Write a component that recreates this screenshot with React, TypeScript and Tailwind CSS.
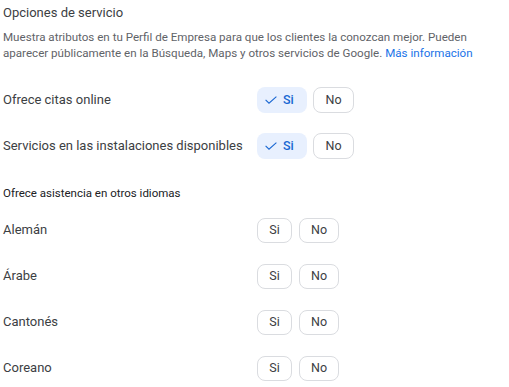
import React from "react";

const font = { fontFamily: "Roboto, 'Noto Sans', sans-serif" };

function Check() {
  return (
    <svg width="12" height="8" viewBox="0 0 12 8" fill="none" className="shrink-0">
      <path d="M0.6 3.8 L4 7.2 L11.4 0.6" stroke="#1967d2" strokeWidth="1.1" />
    </svg>
  );
}

function SelectedPair() {
  return (
    <div className="flex items-center gap-[6px]">
      <div className="flex h-[26px] w-[50px] items-center rounded-[8px] bg-[#e8f0fe] pl-[8px] text-[12.5px] font-medium text-[#1967d2]">
        <Check />
        <span className="ml-[6px]">Si</span>
      </div>
      <div className="flex h-[26px] w-[41px] items-center justify-center rounded-[8px] border border-[#dadce0] text-[12.5px] text-[#3c4043]">
        No
      </div>
    </div>
  );
}

function PlainPair() {
  return (
    <div className="flex items-center gap-[7px]">
      <div className="flex h-[25px] w-[35px] items-center justify-center rounded-[8px] border border-[#dadce0] text-[12.5px] text-[#3c4043]">
        Si
      </div>
      <div className="flex h-[25px] w-[40px] items-center justify-center rounded-[8px] border border-[#dadce0] text-[12.5px] text-[#3c4043]">
        No
      </div>
    </div>
  );
}

function Row({ label, selected }: { label: string; selected?: boolean }) {
  return (
    <div className="flex h-[46px] items-center">
      <div className="w-[254px] whitespace-nowrap text-[13px] text-[#3c4043]">{label}</div>
      {selected ? <SelectedPair /> : <PlainPair />}
    </div>
  );
}

export default function App() {
  return (
    <div className="h-[387px] w-[509px] overflow-hidden bg-white pl-[3px] pt-[3px]" style={font}>
      <div className="text-[13px] leading-[20px] text-[#3c4043]">Opciones de servicio</div>
      <div className="mt-[6px] whitespace-nowrap text-[11.6px] leading-[16px] text-[#5f6368]">
        Muestra atributos en tu Perfil de Empresa para que los clientes la conozcan mejor. Pueden
        <br />
        aparecer públicamente en la Búsqueda, Maps y otros servicios de Google.{" "}
        <span className="text-[#1a73e8]">Más información</span>
      </div>
      <div className="mt-[16px]">
        <Row label="Ofrece citas online" selected />
        <Row label="Servicios en las instalaciones disponibles" selected />
      </div>
      <div className="mt-[16px] text-[11.5px] leading-[16px] text-[#202124]">
        Ofrece asistencia en otros idiomas
      </div>
      <div className="mt-[6px]">
        <Row label="Alemán" />
        <Row label="Árabe" />
        <Row label="Cantonés" />
        <Row label="Coreano" />
      </div>
    </div>
  );
}
